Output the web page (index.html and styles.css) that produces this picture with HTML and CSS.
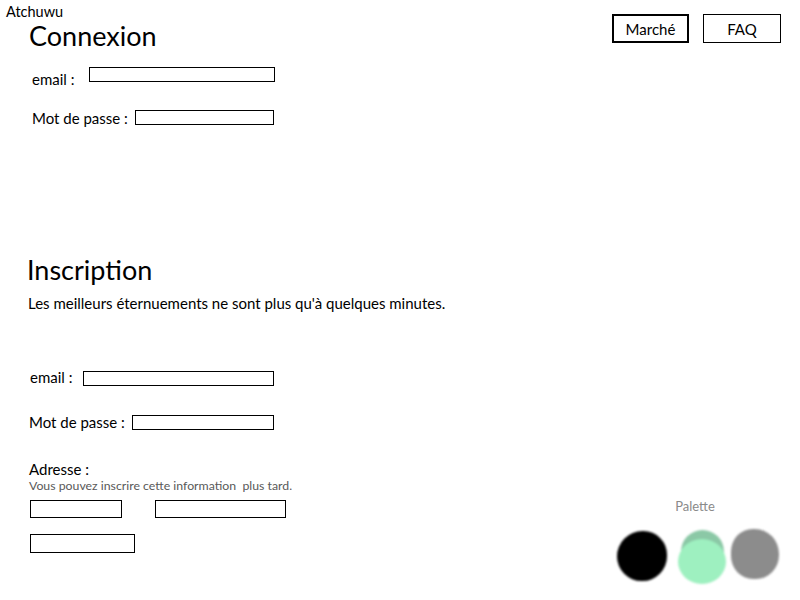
FILE: index.html
```html
<!DOCTYPE html>
<html lang="fr">
<head>
<meta charset="utf-8">
<title>Atchuwu</title>
<link rel="stylesheet" href="styles.css">
</head>
<body>
<div class="page">
  <div class="top">
    <div class="left">
      <div class="brand">Atchuwu</div>
      <section class="login">
        <h1 class="title">Connexion</h1>
        <div class="row row-email1"><span class="label">email :</span><span class="field f-email1"></span></div>
        <div class="row row-pass1"><span class="label">Mot de passe :</span><span class="field f-pass1"></span></div>
      </section>
    </div>
    <nav class="nav">
      <a class="btn btn-active">Marché</a>
      <a class="btn">FAQ</a>
    </nav>
  </div>
  <section class="signup">
    <h1 class="title title2">Inscription</h1>
    <p class="lead">Les meilleurs éternuements ne sont plus qu'à quelques minutes.</p>
    <div class="bottom">
      <div class="form">
        <div class="row row-email2"><span class="label">email :</span><span class="field f-email2"></span></div>
        <div class="row row-pass2"><span class="label">Mot de passe :</span><span class="field f-pass2"></span></div>
        <div class="addr">
          <div class="label">Adresse :</div>
          <div class="hint">Vous pouvez inscrire cette information&nbsp; plus tard.</div>
          <div class="addr-row">
            <span class="field f-a1"></span>
            <span class="field f-a2"></span>
          </div>
          <div class="addr-row2"><span class="field f-a3"></span></div>
        </div>
      </div>
      <div class="palette">
        <div class="pal-title">Palette</div>
        <div class="swatches">
          <span class="sw sw-black"></span>
          <span class="sw sw-green"><span class="g-top"></span><span class="g-bot"></span></span>
          <span class="sw sw-grey"></span>
        </div>
      </div>
    </div>
  </section>
</div>
</body>
</html>
```
FILE: styles.css
```css
* { box-sizing: border-box; }
html, body { margin: 0; padding: 0; background: #fff; }
body {
  font-family: "Lato", "Open Sans", sans-serif;
  color: #000;
  width: 800px;
  height: 600px;
  overflow: hidden;
}
.top { display: flex; justify-content: space-between; align-items: flex-start; }
.brand { font-size: 14.5px; line-height: 16px; padding: 4px 0 0 6px; }
.login { padding-left: 29px; }
.title {
  font-weight: 400;
  font-size: 27px;
  line-height: 30px;
  margin: 1px 0 0 0;
}
.row { display: flex; align-items: flex-start; }
.label { font-size: 15px; line-height: 18px; display: block; }
.field { display: block; border: 1px solid #000; height: 15px; background: #fff; }

.row-email1 { margin: 16px 0 0 3px; }
.row-email1 .label { width: 57px; margin-top: 3px; }
.f-email1 { width: 186px; }
.row-pass1 { margin: 21px 0 0 3px; }
.row-pass1 .label { width: 103px; }
.f-pass1 { width: 139px; margin-top: 1px; }

.nav { display: flex; gap: 14px; padding: 14px 19px 0 0; }
.btn {
  display: flex; align-items: center; justify-content: center;
  border: 1px solid #000;
  height: 29px;
  width: 78px;
  font-size: 15px;
}
.btn-active { border-width: 2px; width: 77px; }

.signup { padding: 0 0 0 27px; margin-top: 128px; }
.title2 { margin: 0; }
.lead { font-size: 15px; margin: 9px 0 0 1px; line-height: 18px; }
.bottom { display: flex; justify-content: space-between; align-items: flex-start; }
.form { padding-top: 56px; }
.row-email2 { margin-left: 3px; }
.row-email2 .label { width: 53px; }
.f-email2 { width: 191px; margin-top: 3px; }
.row-pass2 { margin: 27px 0 0 2px; }
.row-pass2 .label { width: 103px; }
.f-pass2 { width: 142px; margin-top: 2px; }
.addr { margin: 29px 0 0 2px; }
.hint { font-size: 12.3px; color: #595959; line-height: 15px; }
.addr-row { display: flex; gap: 33px; margin: 7px 0 0 1px; }
.f-a1 { width: 92px; height: 18px; }
.f-a2 { width: 131px; height: 18px; }
.addr-row2 { margin: 16px 0 0 1px; }
.f-a3 { width: 105px; height: 19px; }

.palette { padding: 186px 21px 0 0; display: flex; flex-direction: column; align-items: center; }
.pal-title { font-size: 13px; color: #8a8a8a; line-height: 16px; margin-right: 6px; }
.swatches { display: flex; align-items: flex-start; margin-top: 15px; }
.sw { display: block; filter: blur(0.9px); position: relative; }
.sw-black { background: #000; width: 50px; height: 50px; margin-top: 2px; border-radius: 52% 48% 50% 50%; }
.sw-green { width: 48px; height: 54px; margin-left: 11px; margin-top: 1px; }
.g-top { position: absolute; left: 3px; top: 0; width: 43px; height: 36px; border-radius: 22px 22px 10px 10px; background: #8bc8a6; }
.g-bot { position: absolute; left: 0; top: 9px; width: 48px; height: 45px; border-radius: 50%; background: #9ef0c0; }
.sw-grey { background: #8c8c8c; width: 48px; height: 50px; margin-left: 5px; border-radius: 45% 50% 48% 46%; }
```
